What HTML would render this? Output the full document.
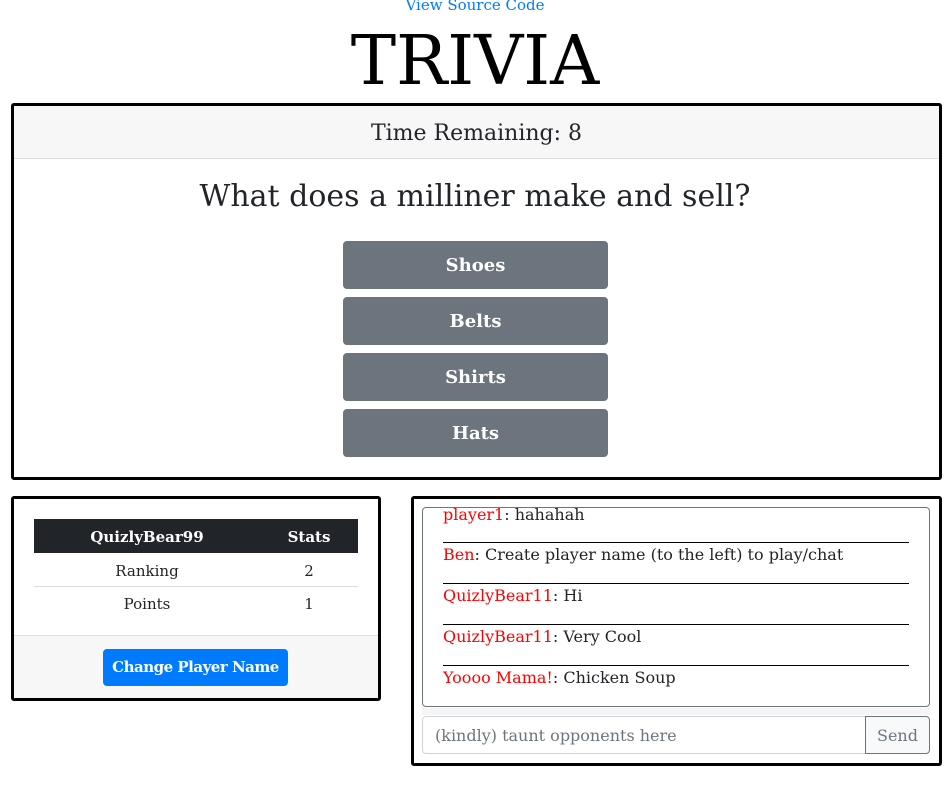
<!DOCTYPE html>
<html><head><style>
*{box-sizing:border-box;margin:0;padding:0}
body{width:948px;height:785px;background:#fff;font-family:"DejaVu Serif","Liberation Serif",serif;color:#212529;position:relative;overflow:hidden}
.a{position:absolute}
.src{left:0;width:950px;top:-4px;text-align:center;color:#007bff;font-size:15px}
.title{left:0;width:950px;top:22px;text-align:center;font-size:68px;color:#000}
.card{border:3px solid #000;background:#fff;border-radius:3px}
.btn{left:343px;width:265px;height:48px;background:#6c757d;color:#fff;border-radius:4px;text-align:center;line-height:50px;font-size:18px;font-weight:bold}
.msg{left:443px;font-size:16px;width:466px;border-bottom:1px solid #000;height:41px}
.msg span{color:#f00}
</style></head><body>
<div class="a src">View Source Code</div>
<div class="a title">TRIVIA</div>
<div class="a card" style="left:11px;top:103px;width:931px;height:377px">
 <div style="height:53px;background:#f7f7f7;border-bottom:1px solid #ddd;text-align:center;line-height:56px;font-size:22px">Time Remaining: 8</div>
</div>
<div class="a" style="left:0;width:950px;top:179px;text-align:center;font-size:30px">What does a milliner make and sell?</div>
<div class="a btn" style="top:241px">Shoes</div>
<div class="a btn" style="top:297px">Belts</div>
<div class="a btn" style="top:353px">Shirts</div>
<div class="a btn" style="top:409px">Hats</div>

<div class="a card" style="left:11px;top:496px;width:370px;height:205px">
 <div style="position:absolute;left:0;right:0;top:136px;bottom:0;background:#f7f7f7;border-top:1px solid #ddd"></div>
</div>
<div class="a" style="left:34px;top:519px;width:324px;height:34px;background:#212529;color:#fff;font-size:15px;font-weight:bold;line-height:36px">
 <span class="a" style="left:0;width:226px;text-align:center">QuizlyBear99</span><span class="a" style="left:226px;width:98px;text-align:center">Stats</span></div>
<div class="a" style="left:34px;top:553px;width:324px;height:34px;border-bottom:1px solid #ddd;font-size:15px;line-height:36px">
 <span class="a" style="left:0;width:226px;text-align:center">Ranking</span><span class="a" style="left:226px;width:98px;text-align:center">2</span></div>
<div class="a" style="left:34px;top:587px;width:324px;height:34px;font-size:15px;line-height:34px">
 <span class="a" style="left:0;width:226px;text-align:center">Points</span><span class="a" style="left:226px;width:98px;text-align:center">1</span></div>
<div class="a" style="left:103px;top:649px;width:185px;height:37px;background:#007bff;color:#fff;border-radius:4px;text-align:center;line-height:37px;font-size:15px;font-weight:bold;letter-spacing:-0.5px">Change Player Name</div>

<div class="a card" style="left:411px;top:496px;width:531px;height:270px"></div>
<div class="a" style="left:422px;top:507px;width:508px;height:200px;border:1px solid #6c757d;border-radius:4px;overflow:hidden"></div>
<div class="a msg" style="top:502px;height:41px;line-height:26px"><span>player1</span>: hahahah</div>
<div class="a msg" style="top:543px;line-height:24px"><span>Ben</span>: Create player name (to the left) to play/chat</div>
<div class="a msg" style="top:584px;line-height:24px"><span>QuizlyBear11</span>: Hi</div>
<div class="a msg" style="top:625px;line-height:24px"><span>QuizlyBear11</span>: Very Cool</div>
<div class="a msg" style="top:666px;line-height:24px;border:none"><span>Yoooo Mama!</span>: Chicken Soup</div>
<div class="a" style="left:422px;top:708px;width:508px;height:7px;background:#f5f5f5"></div>
<div class="a" style="left:422px;top:716px;width:444px;height:38px;border:1px solid #ced4da;border-radius:4px 0 0 4px;color:#6c757d;font-size:16px;line-height:38px;padding-left:12px">(kindly) taunt opponents here</div>
<div class="a" style="left:865px;top:716px;width:65px;height:38px;border:1px solid #6c757d;border-radius:0 4px 4px 0;background:#f8f9fa;color:#6c757d;font-size:16px;line-height:38px;text-align:center">Send</div>
</body></html>
